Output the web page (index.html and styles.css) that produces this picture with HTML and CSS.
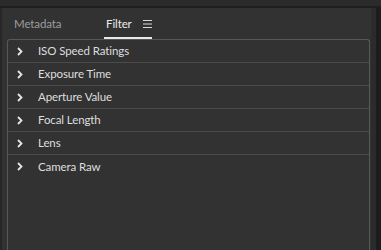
FILE: index.html
```html
<!DOCTYPE html>
<html>
<head>
<meta charset="utf-8">
<link rel="stylesheet" href="styles.css">
</head>
<body>
<div class="topbar"></div>
<div class="topline"></div>
<div class="main">
  <div class="leftstrip"></div>
  <div class="panel">
    <div class="tabs">
      <div class="tab">Metadata</div>
      <div class="tab active">Filter
        <svg class="menu" width="9" height="8" viewBox="0 0 9 8"><path d="M0 0.5H9M0 4H9M0 7.5H9" stroke="#d6d6d6" stroke-width="1"/></svg>
      </div>
    </div>
    <div class="box">
      <div class="row"><svg class="chev" width="6" height="9" viewBox="0 0 6 9"><path d="M1 1L4.5 4.5L1 8" fill="none" stroke="#e6e6e6" stroke-width="1.8"/></svg><span>ISO Speed Ratings</span></div>
      <div class="row"><svg class="chev" width="6" height="9" viewBox="0 0 6 9"><path d="M1 1L4.5 4.5L1 8" fill="none" stroke="#e6e6e6" stroke-width="1.8"/></svg><span>Exposure Time</span></div>
      <div class="row"><svg class="chev" width="6" height="9" viewBox="0 0 6 9"><path d="M1 1L4.5 4.5L1 8" fill="none" stroke="#e6e6e6" stroke-width="1.8"/></svg><span>Aperture Value</span></div>
      <div class="row"><svg class="chev" width="6" height="9" viewBox="0 0 6 9"><path d="M1 1L4.5 4.5L1 8" fill="none" stroke="#e6e6e6" stroke-width="1.8"/></svg><span>Focal Length</span></div>
      <div class="row"><svg class="chev" width="6" height="9" viewBox="0 0 6 9"><path d="M1 1L4.5 4.5L1 8" fill="none" stroke="#e6e6e6" stroke-width="1.8"/></svg><span>Lens</span></div>
      <div class="row last"><svg class="chev" width="6" height="9" viewBox="0 0 6 9"><path d="M1 1L4.5 4.5L1 8" fill="none" stroke="#e6e6e6" stroke-width="1.8"/></svg><span>Camera Raw</span></div>
    </div>
  </div>
  <div class="rightstrip1"></div>
  <div class="rightstrip2"></div>
</div>
</body>
</html>
```
FILE: styles.css
```css
html, body {
  margin: 0;
  padding: 0;
  width: 381px;
  height: 250px;
  overflow: hidden;
  background: #1e1e1e;
  font-family: "Lato", "Open Sans", sans-serif;
  font-size: 11.5px;
  letter-spacing: -0.1px;
}
.topbar {
  height: 6px;
  background: #2b2b2b;
}
.topline {
  height: 2px;
  background: #1f1f1f;
}
.main {
  display: flex;
  height: 242px;
}
.leftstrip {
  width: 2px;
  background: #272727;
}
.panel {
  flex: 1;
  background: #323232;
  display: flex;
  flex-direction: column;
  padding: 0 1px 0 5px;
}
.rightstrip1 {
  width: 5px;
  background: #2b2b2b;
}
.rightstrip2 {
  width: 5px;
  background: #1c1c1c;
}
.tabs {
  display: flex;
  height: 31px;
}
.tab {
  color: #9d9d9d;
  padding: 0 0 0 7px;
  height: 31px;
  box-sizing: border-box;
  display: flex;
  align-items: center;
}
.tab:first-child {
  width: 97px;
}
.tab.active {
  color: #ececec;
  position: relative;
  padding: 0 0 0 2px;
  width: 48px;
  gap: 11px;
}
.tab.active::after {
  content: "";
  position: absolute;
  left: 0;
  right: 0;
  bottom: 0;
  height: 2px;
  background: #e8e8e8;
}
.menu {
  display: block;
  margin-top: 1px;
}
.box {
  flex: 1;
  border: 1px solid #585858;
  border-bottom: none;
  border-radius: 3px 3px 0 0;
}
.row {
  height: 23px;
  box-sizing: border-box;
  padding-bottom: 1px;
  border-bottom: 1px solid #4b4b4b;
  display: flex;
  align-items: center;
  color: #dedede;
}
.row.last {
  border-bottom: none;
}
.chev {
  margin-left: 9px;
  margin-right: 15px;
  display: block;
  margin-top: 1px;
}
```
